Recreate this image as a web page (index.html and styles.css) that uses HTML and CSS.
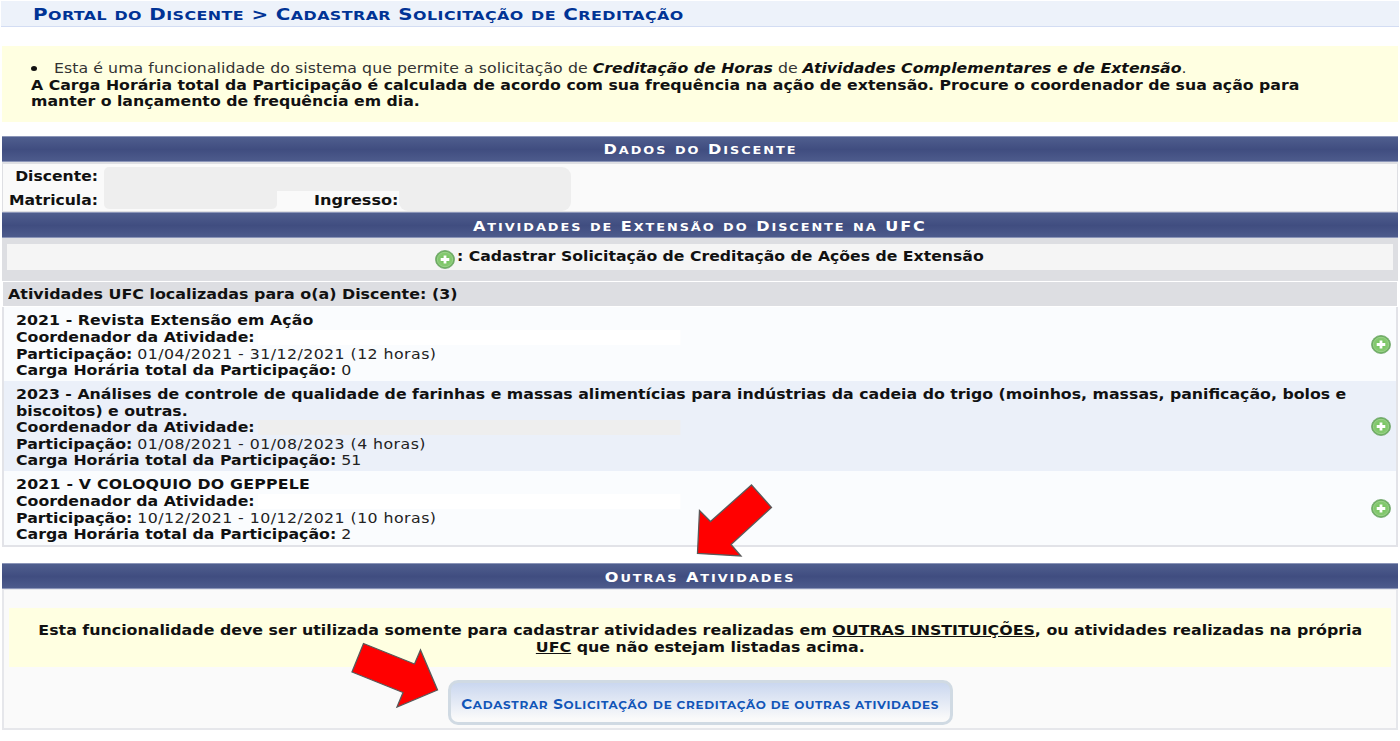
FILE: index.html
```
<!DOCTYPE html>
<html lang="pt-BR">
<head>
<meta charset="utf-8">
<title>Portal do Discente</title>
<link rel="stylesheet" href="styles.css">
</head>
<body>
<svg class="defs" aria-hidden="true">
  <defs>
    <radialGradient id="green" cx="50%" cy="50%" r="55%">
      <stop offset="0" stop-color="#68bd52"/><stop offset=".6" stop-color="#85ca70"/><stop offset="1" stop-color="#5b9d52"/>
    </radialGradient>
    <symbol id="plus" viewBox="0 0 20 19" preserveAspectRatio="none">
      <ellipse cx="10" cy="9.500" rx="9.500" ry="9" fill="url(#green)" stroke="#6fa56a" stroke-width=".8"/>
      <ellipse cx="10" cy="9.500" rx="7.600" ry="7.200" fill="none" stroke="#b3dfa4" stroke-width="1" opacity=".6"/>
      <path d="M8.600 5.400h2.800v2.700h2.900v2.800h-2.900v2.700H8.600v-2.700H5.700V8.100h2.900z" fill="#fff"/>
    </symbol>
  </defs>
</svg>
<h1 class="title"><span class="t caps"><span class="w">Portal</span> <span class="low">do</span> <span class="w">Discente</span> &gt; <span class="w">Cadastrar</span> <span class="w">Solicitação</span> <span class="low">de</span> <span class="w">Creditação</span></span></h1>
<section class="notice">
  <p class="bullet"><i class="dot"></i><span class="t"><span class="lead">Esta é uma funcionalidade do sistema que permite a solicitação de</span> <b><em>Creditação de Horas</em></b> de <b><em>Atividades Complementares e de Extensão</em></b>.</span></p>
  <p><b class="t">A Carga Horária total da Participação é calculada de acordo com sua frequência na ação de extensão. Procure o coordenador de sua ação para<br>manter o lançamento de frequência em dia.</b></p>
</section>
<main>
  <h2 class="bar"><span class="t caps"><span class="w">Dados</span> <span class="low">do</span> <span class="w">Discente</span></span></h2>
  <section class="student">
    <div class="redacted">
      <div class="mask mask-top"></div>
      <div class="mask mask-left"></div>
      <div class="mask mask-right"></div>
    </div>
    <div class="field"><b class="label">Discente:</b></div>
    <div class="field"><b class="label">Matricula:</b><b class="entry">Ingresso:</b></div>
  </section>
  <h2 class="bar bar-low"><span class="t caps"><span class="w">Atividades</span> <span class="low">de</span> <span class="w">Extensão</span> <span class="low">do</span> <span class="w">Discente</span> <span class="low">na</span> UFC</span></h2>
  <div class="legend"><div class="legend-in"><svg class="icon"><use href="#plus"/></svg><b class="t">: Cadastrar Solicitação de Creditação de Ações de Extensão</b></div></div>
  <h3 class="found"><span class="t">Atividades UFC localizadas para o(a) Discente: (3)</span></h3>
  <div class="list">
    <article class="row">
      <div class="info">
        <b class="name-1">2021 - Revista Extensão em Ação</b>
        <div class="coord"><b>Coordenador da Atividade:</b><i class="name"></i></div>
        <div><b>Participação:</b> <span class="dates">01/04/2021 - 31/12/2021 (12 horas)</span></div>
        <div><b>Carga Horária total da Participação:</b> 0</div>
      </div>
      <svg class="icon"><use href="#plus"/></svg>
    </article>
    <article class="row row-alt">
      <div class="info">
        <b>2023 - Análises de controle de qualidade de farinhas e massas alimentícias para indústrias da cadeia do trigo (moinhos, massas, panificação, bolos e<br>biscoitos) e outras.</b>
        <div class="coord"><b>Coordenador da Atividade:</b><i class="name"></i></div>
        <div><b>Participação:</b> <span class="dates">01/08/2021 - 01/08/2023 (4 horas)</span></div>
        <div><b>Carga Horária total da Participação:</b> 51</div>
      </div>
      <svg class="icon"><use href="#plus"/></svg>
    </article>
    <article class="row">
      <div class="info">
        <b class="name-3">2021 - V COLOQUIO DO GEPPELE</b>
        <div class="coord"><b>Coordenador da Atividade:</b><i class="name"></i></div>
        <div><b>Participação:</b> <span class="dates">10/12/2021 - 10/12/2021 (10 horas)</span></div>
        <div><b>Carga Horária total da Participação:</b> 2</div>
      </div>
      <svg class="icon"><use href="#plus"/></svg>
    </article>
  </div>
  <h2 class="bar bar-low bar-other"><span class="t caps"><span class="w">Outras</span> <span class="w">Atividades</span></span></h2>
  <section class="other">
    <p class="warn"><span class="t">Esta funcionalidade deve ser utilizada somente para cadastrar atividades realizadas em <u>OUTRAS INSTITUIÇÕES</u>, ou atividades realizadas na própria<br><u>UFC</u> que não estejam listadas acima.</span></p>
    <button class="action"><span class="t caps"><span class="w">Cadastrar</span> <span class="w">Solicitação</span> <span class="low">de creditação de outras atividades</span></span></button>
  </section>
</main>
<svg class="arrows" viewBox="0 0 1400 741">
  <path d="M751.5 485 L771.5 507.5 L731 544.5 L741 556 L697.5 553.5 L699.5 510.5 L710.5 521.5 Z"/>
  <path d="M363.5 643.5 L414.5 664 L420.5 650 L437.5 690 L397 707 L403 692.500 L352 672 Z"/>
</svg>
</body>
</html>
```
FILE: styles.css
```
* { box-sizing: border-box; }
body {
  --stretch: 1.126;
  margin: 0; width: 1400px; height: 741px; overflow: hidden; position: relative;
  background: #fff; color: #111;
  font: 14px/16.6px Verdana, "DejaVu Sans", sans-serif;
}
h1, h2, h3, p { margin: 0; }
.defs { position: absolute; width: 0; height: 0; }

/* Wide lettering */
.t { display: inline-block; transform: scaleX(var(--stretch)); transform-origin: left; white-space: nowrap; }
.w, .low { display: inline-block; font-size: .8em; text-transform: uppercase; }
.w::first-letter { font-size: 1.25em; }

.title {
  --stretch: 1.24;
  margin: 1px 1px 0; height: 26px; padding-left: 32px;
  background: #edf2fa; border-bottom: 1px solid #d3ddf3;
  color: #003395; font-size: 16px; line-height: 27px; letter-spacing: .35px;
}
.notice { margin: 19px 2px 0; height: 76px; padding: 14px 0 0 29px; background: #ffffe1; }
.notice .t { --stretch: 1.124; }
.bullet { display: flex; align-items: center; color: #333; }
.bullet b { color: #111; }
.lead { letter-spacing: .06px; }
.dot { width: 6px; height: 5px; margin: 1px 17px 0 0; border-radius: 50%; background: #111; }
main { margin: 14px 2px 0; display: flex; flex-direction: column; }
.bar {
  --stretch: 1.147;
  height: 26px; text-align: center; color: #fff;
  font-size: 14px; line-height: 25px; letter-spacing: 1.7px;
  border: 1px solid #8b95b8; border-width: 1px 0;
  background: linear-gradient(#4f5e8e, #404d80 52%, #4d5b8c);
}
.bar-low { line-height: 27px; }
.bar .t, .warn .t, .action .t { transform-origin: center; }
.student {
  position: relative; height: 50px;
  border: 1px solid #dedfe3; border-top-width: 2px; background: #fafafa;
}
.field { position: relative; display: flex; height: 24px; line-height: 24px; }
.label { width: 95px; text-align: right; transform: scaleX(1.115); transform-origin: right; }
.entry { margin-left: 216px; transform: scaleX(1.15); transform-origin: left; }
.redacted { position: absolute; left: 101px; top: 3px; width: 467px; height: 44px; display: grid; grid-template: 24px 20px / 173px 122px 172px; }
.mask { background: #eee; }
.mask-top { grid-column: 1 / 4; border-radius: 5px 9px 0 0; }
.mask-left { grid-column: 1; margin-bottom: 2px; border-radius: 0 0 5px 5px; }
.mask-right { grid-column: 3; border-radius: 0 0 9px 9px; }
.legend { --stretch: 1.12; height: 43px; padding: 6px 5px 11px; background: #dddee2; }
.legend-in { height: 26px; display: flex; padding-left: 428px; background: #f5f5f5; line-height: 24px; }
.icon { width: 20px; height: 19px; flex: none; }
.legend .icon { margin: 6px 2px 0 0; }
.found { --stretch: 1.136; margin: 1px 1px; height: 24px; padding-left: 5px; background: #dddee2; font-size: 14px; line-height: 25px; }
.list { border: solid #e2e3e8; border-width: 0 2px 2px; height: 240px; }
.row { display: flex; align-items: center; height: 74px; padding: 0 5px 0 12px; background: #fafcfe; }
.row-alt { height: 90px; background: #ebf0f9; }
.row .icon { margin-left: auto; }
.info { width: 1200px; padding-top: 3px; white-space: nowrap; color: #222; transform: scaleX(var(--stretch)); transform-origin: left; }
.info b { color: #111; }
.name-1 { letter-spacing: .06px; }
.name-3 { letter-spacing: .18px; }
.dates { letter-spacing: .4px; }
.coord { display: flex; }
.name { width: 375px; height: 15px; margin: 1px 0 0 3px; background: #fff; }
.row-alt .name { background: #eee; }
.bar-other { margin-top: 16px; }
.other {
  height: 141px; padding: 18px 5px 0; display: flex; flex-direction: column; align-items: center;
  border: 2px solid #e6e7eb; border-top-width: 1px; background: #fafafa;
}
.warn { --stretch: 1.131; width: 100%; height: 59px; padding-top: 14px; background: #ffffe1; font-weight: bold; text-align: center; }
.action {
  --stretch: 1.1;
  width: 505px; height: 45px; margin-top: 13px; padding: 3px 0 0; border: 3px solid #d0dae3; border-radius: 10px;
  background: linear-gradient(#cad7ef, #fafafa 92%);
  color: #1155b8; font: bold 13.6px/20px Montserrat, Inter, sans-serif; letter-spacing: .65px;
  display: flex; align-items: center; justify-content: center;
}
.arrows { position: absolute; left: 0; top: 0; width: 1400px; height: 741px; pointer-events: none; }
.arrows path { fill: #f00; stroke: #595959; stroke-width: 1.3; }
```
